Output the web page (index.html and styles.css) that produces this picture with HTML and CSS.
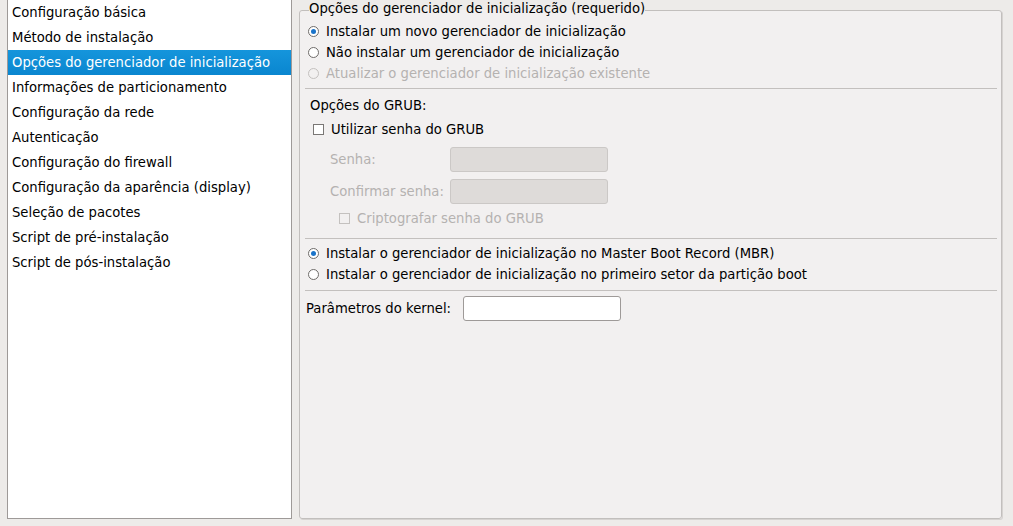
FILE: index.html
```html
<!DOCTYPE html>
<html lang="pt-BR">
<head>
  <meta charset="UTF-8">
  <title>Opções do gerenciador de inicialização</title>
  <link rel="stylesheet" href="styles.css">
</head>
<body>
  <div class="window">
    <ul class="steps">
      <li>Configuração básica</li>
      <li>Método de instalação</li>
      <li class="selected">Opções do gerenciador de inicialização</li>
      <li>Informações de particionamento</li>
      <li>Configuração da rede</li>
      <li>Autenticação</li>
      <li>Configuração do firewall</li>
      <li>Configuração da aparência (display)</li>
      <li>Seleção de pacotes</li>
      <li>Script de pré-instalação</li>
      <li>Script de pós-instalação</li>
    </ul>

    <fieldset class="frame">
      <legend>Opções do gerenciador de inicialização (requerido)</legend>

      <div class="group top-group">
        <label class="option"><span class="radio checked"></span>Instalar um novo gerenciador de inicialização</label>
        <label class="option"><span class="radio"></span>Não instalar um gerenciador de inicialização</label>
        <label class="option disabled"><span class="radio"></span>Atualizar o gerenciador de inicialização existente</label>
      </div>

      <div class="separator"></div>

      <div class="grub">
        <div class="grub-title">Opções do GRUB:</div>
        <label class="option check-row"><span class="check"></span>Utilizar senha do GRUB</label>
        <div class="field disabled">
          <span class="field-label">Senha:</span>
          <span class="entry"></span>
        </div>
        <div class="field disabled">
          <span class="field-label">Confirmar senha:</span>
          <span class="entry"></span>
        </div>
        <label class="option disabled crypt-row"><span class="check"></span>Criptografar senha do GRUB</label>
      </div>

      <div class="separator"></div>

      <div class="group mbr-group">
        <label class="option"><span class="radio checked"></span>Instalar o gerenciador de inicialização no Master Boot Record (MBR)</label>
        <label class="option"><span class="radio"></span>Instalar o gerenciador de inicialização no primeiro setor da partição boot</label>
      </div>

      <div class="separator"></div>

      <div class="kernel">
        <span>Parâmetros do kernel:</span>
        <span class="entry active"></span>
      </div>
    </fieldset>
  </div>
</body>
</html>
```

FILE: styles.css
```css
html, body {
  margin: 0;
  padding: 0;
  height: 100%;
}

body {
  background-color: #edebe9;
  font-family: 'DejaVu Sans', sans-serif;
  font-size: 13.2px;
  color: #000;
}

.window {
  display: flex;
  height: 526px;
  padding: 0 11px 7px 7px;
  box-sizing: border-box;
  gap: 7px;
}

.steps {
  list-style: none;
  margin: 0;
  padding: 0;
  width: 283px;
  flex-shrink: 0;
  background: #fff;
  border: 1px solid #9e9a98;
  border-top: none;
}

.steps li {
  height: 25px;
  line-height: 25px;
  padding-left: 4px;
  white-space: nowrap;
}

.steps li.selected {
  background: linear-gradient(#1595dc, #0a86cf);
  color: #fff;
}

.frame {
  flex: 1;
  margin: 0;
  padding: 0 4px 0 5px;
  background: #f2f0f0;
  border: 1px solid #c2bfbd;
  border-radius: 3px;
  box-shadow: 1px 1px 0 #d6d3d1;
  min-width: 0;
}

.frame legend {
  padding: 1px 0 4px;
  margin-left: 4px;
  line-height: 15px;
  color: #000;
}

.group {
  display: flex;
  flex-direction: column;
}

.top-group {
  padding: 1px 0 4px;
}

.option {
  display: flex;
  align-items: center;
  height: 21px;
  white-space: nowrap;
  padding-left: 3px;
}

.option.disabled,
.field.disabled {
  color: #b5b2b0;
}

.radio {
  width: 11px;
  height: 11px;
  border: 1px solid #6f6c6a;
  border-radius: 50%;
  box-sizing: border-box;
  margin-right: 7px;
  background: #fff;
  display: flex;
  align-items: center;
  justify-content: center;
}

.radio.checked::after {
  content: "";
  width: 5px;
  height: 5px;
  border-radius: 50%;
  background: #1a73c9;
}

.disabled .radio,
.disabled .check {
  border-color: #c4c1bf;
  background: transparent;
}

.check {
  width: 11px;
  height: 11px;
  border: 1px solid #7a7775;
  box-sizing: border-box;
  background: #fff;
  margin-right: 7px;
}

.separator {
  height: 1px;
  background: #c3c0be;
}

.grub {
  padding: 6px 0 9px 5px;
}

.grub-title {
  height: 21px;
  line-height: 21px;
}

.check-row {
  margin-top: 2px;
  height: 22px;
}

.field {
  display: flex;
  align-items: center;
  padding-left: 20px;
  margin-top: 6px;
  height: 26px;
}

.field-label {
  width: 120px;
}

.entry {
  display: block;
  width: 158px;
  height: 25px;
  box-sizing: border-box;
  border: 1px solid #cbc8c6;
  border-radius: 3px;
  background: #dedbd9;
}

.entry.active {
  background: #fff;
  border-color: #9e9a98;
}

.crypt-row {
  padding-left: 29px;
  margin-top: 4px;
}

.mbr-group {
  padding: 4px 0 5px;
}

.kernel {
  display: flex;
  align-items: center;
  gap: 12px;
  padding: 5px 0 0 1px;
}
```
